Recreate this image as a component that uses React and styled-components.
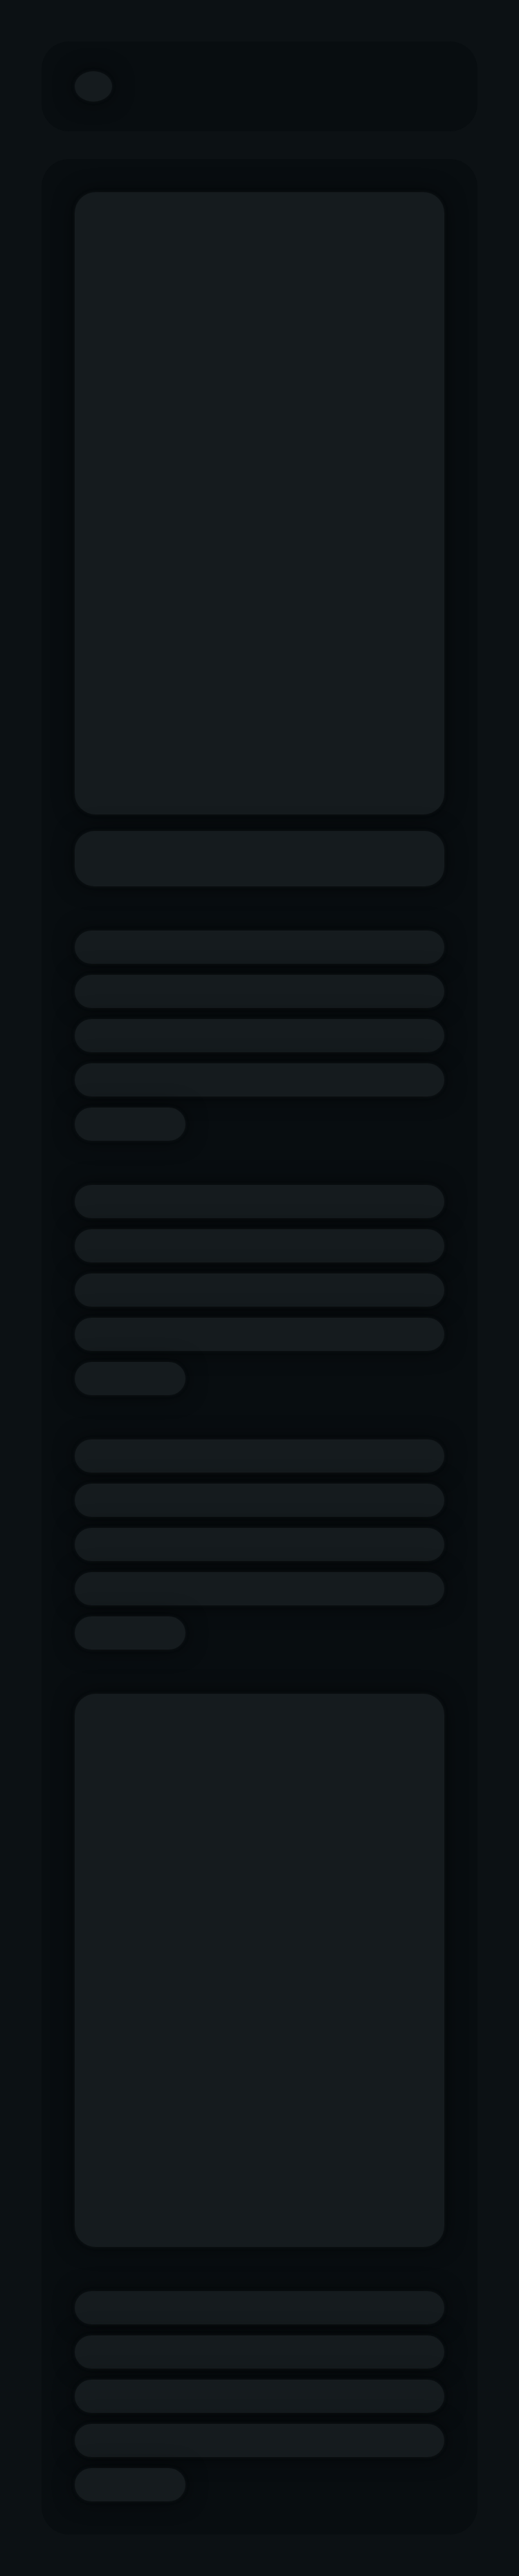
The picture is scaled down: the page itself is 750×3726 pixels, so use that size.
import React from 'react';
import styled, {createGlobalStyle} from 'styled-components';

const colors = {
  page: '#0c1114',
  card: '#080d10',
  bone: '#151b1e',
};

const GlobalStyle = createGlobalStyle`
  html, body {
    margin: 0;
    padding: 0;
    background: ${colors.page};
    font-family: "Liberation Sans", Arial, sans-serif;
  }
  * { box-sizing: border-box; }
`

const Page = styled.div`
  min-height: 3726px;
  padding: 60px;
  display: flex;
  flex-direction: column;
  gap: 40px;
  background: ${colors.page};
`

const Card = styled.div`
  background: ${colors.card};
  border-radius: 40px;
  padding: 48px;
`

const HeaderCard = styled(Card)`
  height: 130px;
  padding: 0 48px;
  display: flex;
  align-items: center;
`

const Body = styled.div`
  display: flex;
  flex-direction: column;
  gap: 64px;
`

const Media = styled.div`
  display: flex;
  flex-direction: column;
  gap: 24px;
`

// every bone shares the same fill and the soft dark halo around it
const Bone = styled.div`
  background: ${colors.bone};
  box-shadow: 0 0 5px rgba(34, 42, 46, 0.35), 0 0 30px rgba(0, 0, 0, 0.55);
`

const Avatar = styled(Bone)`
  width: 54px;
  height: 44px;
  border-radius: 50%;
`

const Picture = styled(Bone)`
  height: ${p => p.$h}px;
  border-radius: 30px;
`

const Bar = styled(Bone)`
  height: 80px;
  border-radius: 28px;
`

const Lines = styled.div`
  display: flex;
  flex-direction: column;
  gap: 16px;
`

const Line = styled(Bone)`
  height: 48px;
  border-radius: 24px;
  width: ${p => p.$short ? '160px' : '100%'};
`

const Paragraph = () => (
  <Lines>
    <Line/>
    <Line/>
    <Line/>
    <Line/>
    <Line $short/>
  </Lines>
);

export default function App() {
  return (
    <>
      <GlobalStyle/>
      <Page>
        <HeaderCard>
          <Avatar/>
        </HeaderCard>
        <Card>
          <Body>
            <Media>
              <Picture $h={900}/>
              <Bar/>
            </Media>
            <Paragraph/>
            <Paragraph/>
            <Paragraph/>
            <Picture $h={800}/>
            <Paragraph/>
          </Body>
        </Card>
      </Page>
    </>
  );
}
